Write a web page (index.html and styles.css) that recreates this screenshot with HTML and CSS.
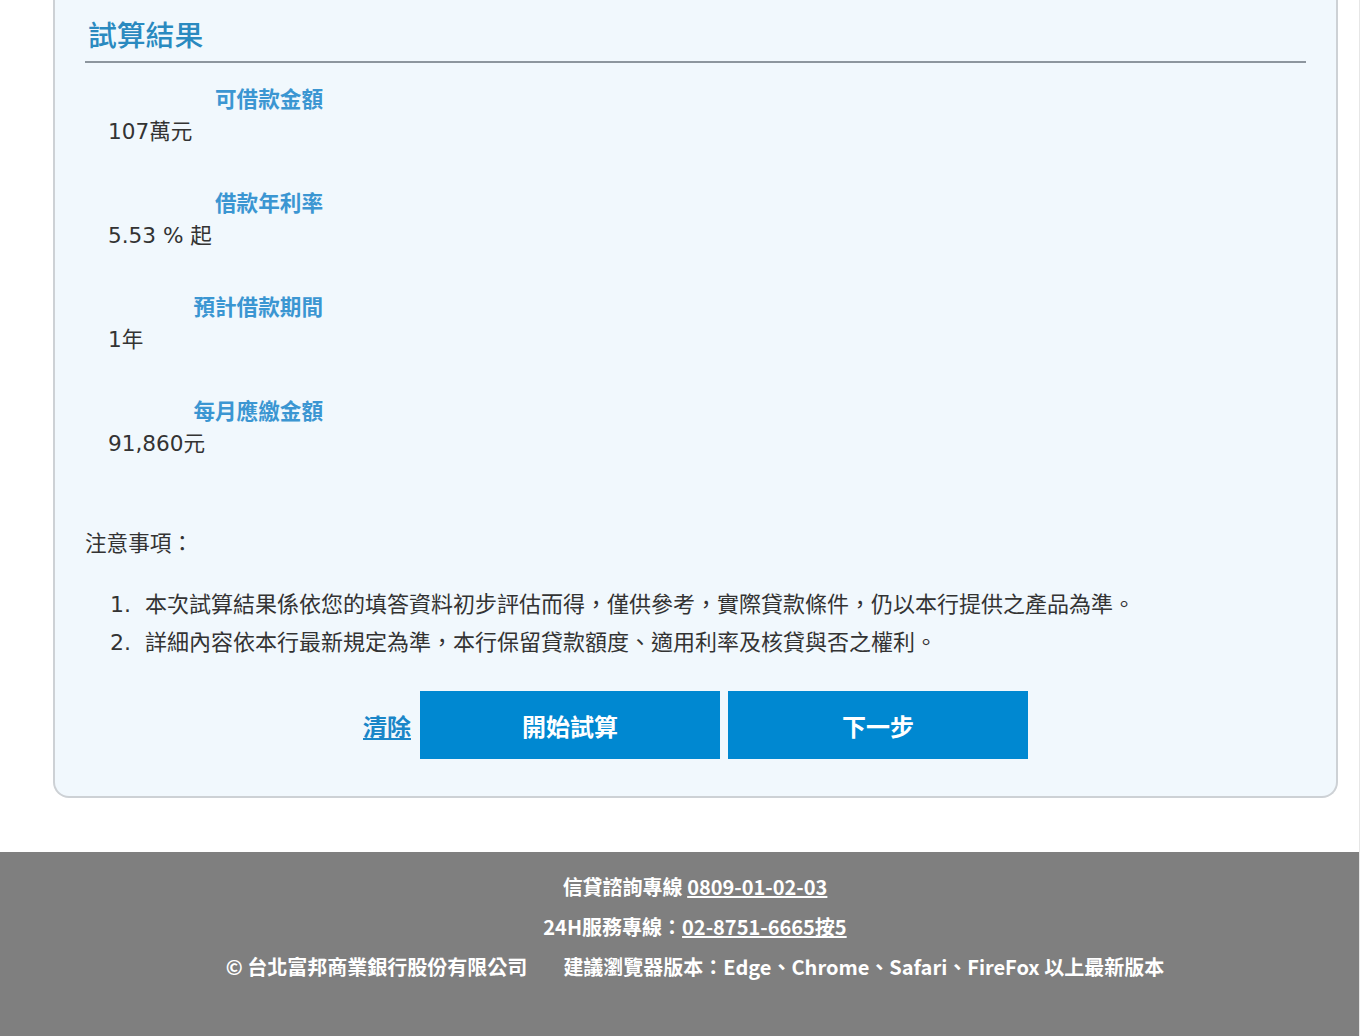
FILE: index.html
```html
<!DOCTYPE html>
<html lang="zh-Hant">
<head>
    <meta charset="UTF-8">
    <meta name="viewport" content="width=device-width, initial-scale=1.0">
    <title>試算結果 - 台北富邦銀行</title>
    <link rel="stylesheet" href="styles.css">
</head>
<body>
    <div class="page">
        <div class="result-card">
            <h2>試算結果</h2>

            <div class="result-list">
                <div class="result-row">
                    <div class="result-label">可借款金額</div>
                    <div class="result-value">107萬元</div>
                </div>
                <div class="result-row">
                    <div class="result-label">借款年利率</div>
                    <div class="result-value">5.53 % 起</div>
                </div>
                <div class="result-row">
                    <div class="result-label">預計借款期間</div>
                    <div class="result-value">1年</div>
                </div>
                <div class="result-row">
                    <div class="result-label">每月應繳金額</div>
                    <div class="result-value">91,860元</div>
                </div>
            </div>

            <p class="notes-title">注意事項：</p>
            <ol class="notes">
                <li>本次試算結果係依您的填答資料初步評估而得，僅供參考，實際貸款條件，仍以本行提供之產品為準。</li>
                <li>詳細內容依本行最新規定為準，本行保留貸款額度、適用利率及核貸與否之權利。</li>
            </ol>

            <div class="actions">
                <a href="#" class="clear-link">清除</a>
                <button type="button" class="btn">開始試算</button>
                <button type="button" class="btn">下一步</button>
            </div>
        </div>

        <footer class="footer">
            <p>信貸諮詢專線 <a href="#">0809-01-02-03</a></p>
            <p>24H服務專線：<a href="#">02-8751-6665按5</a></p>
            <p>© 台北富邦商業銀行股份有限公司<span class="browser-note">建議瀏覽器版本：Edge、Chrome、Safari、FireFox 以上最新版本</span></p>
        </footer>
    </div>
</body>
</html>
```

FILE: styles.css
```css
* {
    margin: 0;
    padding: 0;
    box-sizing: border-box;
}

body {
    font-family: 'DejaVu Sans', 'Noto Sans CJK TC', sans-serif;
    background: #fff;
    color: #333;
}

.page {
    width: 1360px;
    min-height: 1036px;
    border-right: 1px solid #e6e6e6;
    display: flex;
    flex-direction: column;
}

.result-card {
    margin-left: 53px;
    width: 1285px;
    padding: 0 30px 37px;
    background: #f1f8fd;
    border: 2px solid #cdd1d5;
    border-top: none;
    border-radius: 0 0 16px 16px;
}

h2 {
    font-family: 'Noto Sans CJK TC', sans-serif;
    font-size: 28.8px;
    font-weight: 500;
    line-height: 40px;
    color: #2a8ac0;
    padding: 14px 3px 7px;
    border-bottom: 2px solid #8d969e;
}

.result-list {
    padding: 18px 0 30px;
}

.result-row {
    margin-bottom: 36px;
}

.result-label {
    width: 215px;
    margin-left: 23px;
    text-align: right;
    font-family: 'Noto Sans CJK TC', sans-serif;
    font-size: 21.6px;
    font-weight: 700;
    line-height: 34px;
    color: #3b96d2;
}

.result-value {
    margin-left: 23px;
    font-size: 21.6px;
    line-height: 34px;
    color: #333;
}

.notes-title {
    font-size: 21.6px;
    line-height: 34px;
}

.notes {
    list-style: none;
    counter-reset: note;
    margin-top: 25px;
}

.notes li {
    counter-increment: note;
    padding-left: 25px;
    font-size: 22px;
    line-height: 38px;
}

.notes li::before {
    content: counter(note) ".";
    display: inline-block;
    width: 35px;
}

.actions {
    margin-top: 29px;
    display: flex;
    justify-content: center;
    align-items: center;
    gap: 8px;
}

.clear-link {
    margin-right: 1px;
    font-family: 'Noto Sans CJK TC', sans-serif;
    font-size: 24px;
    font-weight: 700;
    color: #1a86c8;
    text-decoration: underline;
}

.btn {
    width: 300px;
    height: 68px;
    background: #0088d1;
    color: #fff;
    border: none;
    font-family: 'Noto Sans CJK TC', sans-serif;
    font-size: 24px;
    font-weight: 700;
    cursor: pointer;
}

.footer {
    margin-top: 54px;
    flex: 1;
    background: #7f7f7f;
    padding: 15px 0 20px 31px;
    text-align: center;
    font-family: 'Noto Sans CJK TC', sans-serif;
    font-size: 20px;
    font-weight: 700;
    line-height: 40px;
    color: #fff;
}

.footer a {
    color: #fff;
    text-decoration: underline;
}

.browser-note {
    margin-left: 36px;
}
```
